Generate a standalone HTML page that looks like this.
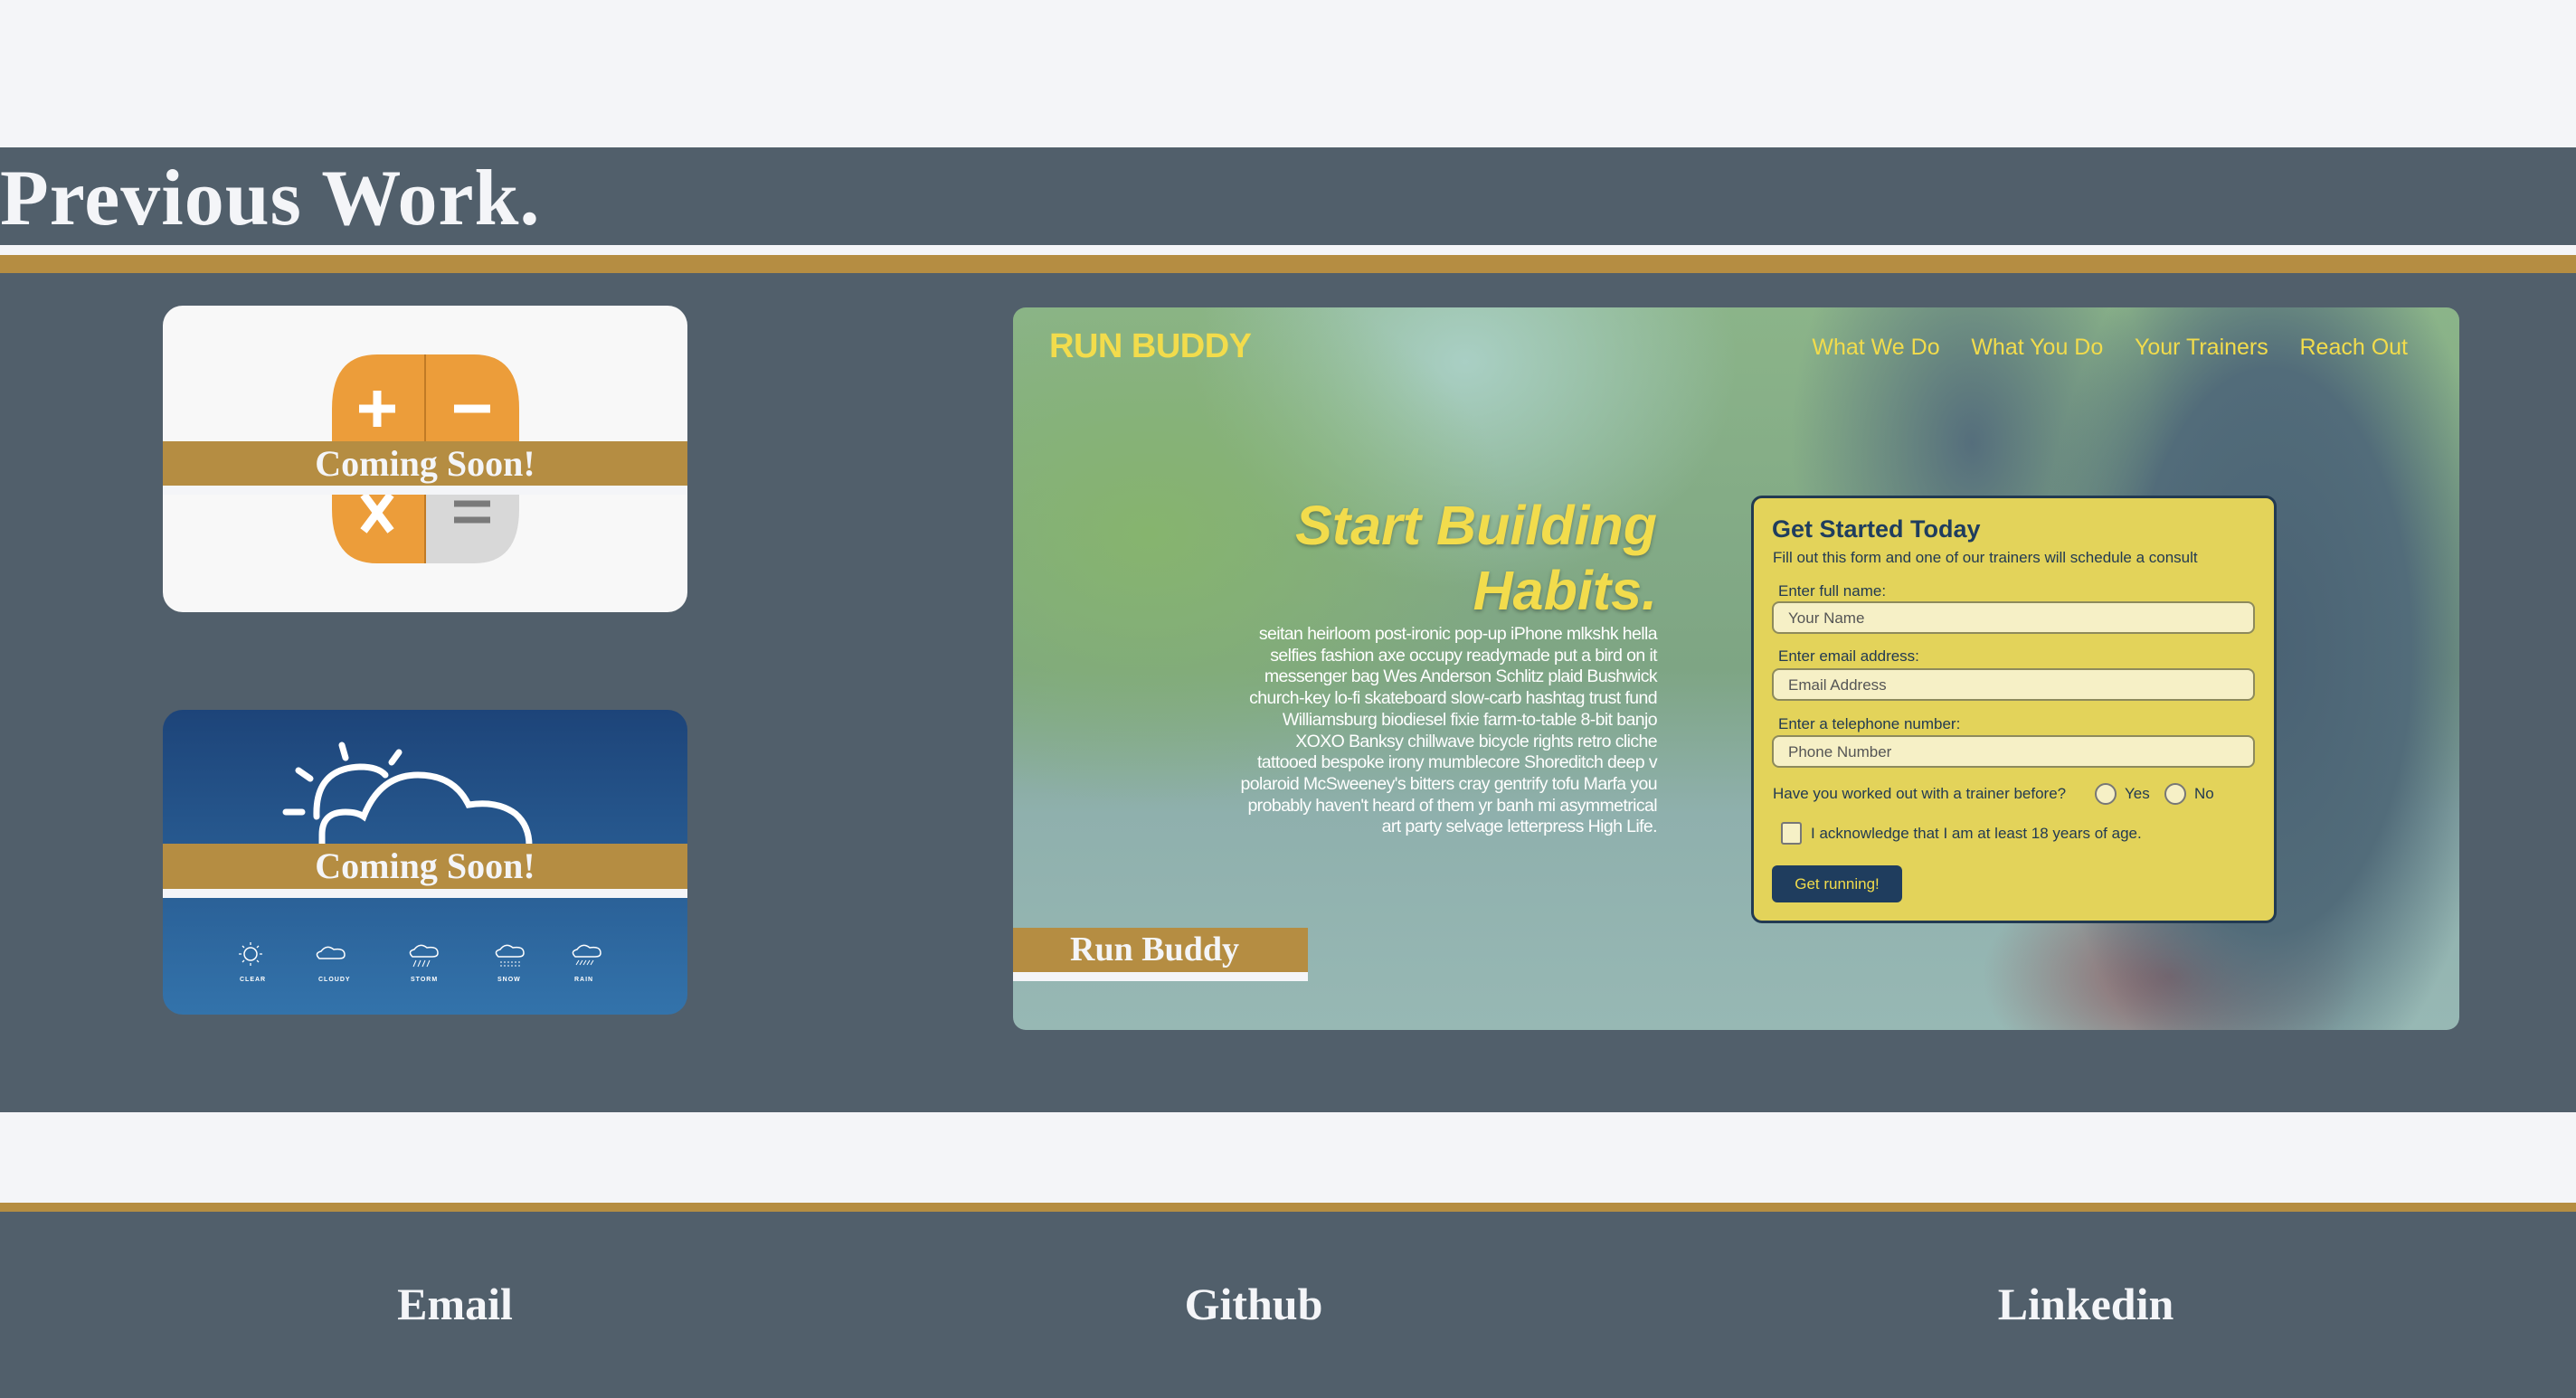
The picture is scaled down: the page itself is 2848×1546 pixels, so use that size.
<!DOCTYPE html>
<html><head><meta charset="utf-8"><style>
*{margin:0;padding:0;box-sizing:border-box}
body{width:2848px;height:1546px;background:#f4f5f8;position:relative;overflow:hidden;font-family:"Liberation Sans",sans-serif}
.abs{position:absolute}
.serif{font-family:"Liberation Serif",serif;font-weight:bold}
.card{position:absolute;border-radius:22px;overflow:hidden}
.banner{position:absolute;left:0;right:0;background:#b58d42;color:#f4f5f8;text-align:center;font-family:"Liberation Serif",serif;font-weight:bold;font-size:40px}
.rb{color:#f2dc4c}
.inp{position:absolute;left:1959px;width:534px;height:36px;border:2px solid #8d8a5c;border-radius:8px;background:#f6f0c6;font-size:17px;color:#555;padding:7px 16px}
</style></head><body>
<div class="abs" style="left:0;top:163px;width:2848px;height:1067px;background:#515f6b"></div>
<div class="abs serif" style="left:0;top:165px;font-size:88px;color:#f4f5f8;letter-spacing:1px;line-height:110px">Previous Work.</div>
<div class="abs" style="left:0;top:271px;width:2848px;height:11px;background:#f4f5f8"></div>
<div class="abs" style="left:0;top:282px;width:2848px;height:20px;background:#b58d42"></div>

<!-- calc card -->
<div class="card" style="left:180px;top:338px;width:580px;height:339px;background:#f8f8f8">
 <svg class="abs" style="left:187px;top:54px" width="207" height="231" viewBox="0 0 207 231">
  <path d="M50 0H157Q207 0 207 60V171Q207 231 157 231H103V0Z" fill="#d8d8d8"/>
  <path d="M50 0H157Q207 0 207 60V115H103V231H50Q0 231 0 171V60Q0 0 50 0Z" fill="#ec9d3a"/>
  <line x1="103" y1="0" x2="103" y2="231" stroke="#c07a25" stroke-width="2"/>
  <path d="M50 40V80M30 60H70" stroke="#fff" stroke-width="9"/>
  <path d="M135 60H175" stroke="#fff" stroke-width="9"/>
  <path d="M35 155L65 195M65 155L35 195" stroke="#fff" stroke-width="9"/>
  <path d="M135 165H175M135 183H175" stroke="#7a7a7a" stroke-width="7"/>
 </svg>
 <div class="abs" style="left:0;top:199px;width:580px;height:10px;background:#f4f5f8"></div>
 <div class="banner" style="top:150px;height:49px;line-height:49px">Coming Soon!</div>
</div>

<!-- weather card -->
<div class="card" style="left:180px;top:785px;width:580px;height:337px;background:linear-gradient(#1d4479,#3373ab)">
 <svg class="abs" style="left:0;top:0" width="580" height="150" viewBox="0 0 580 150">
  <g fill="none" stroke="#fff" stroke-width="7" stroke-linecap="round">
   <path d="M170 118Q168 65 218 63Q238 63 246 72"/>
   <path d="M176 150V138Q176 113 202 113Q215 113 222 118Q240 72 282 72Q322 72 338 105Q370 100 390 115Q405 128 405 150"/>
   <path d="M136 113H154M150 67L163 76M198 39L202 53M261 47L253 58"/>
  </g>
 </svg>
 <div class="banner" style="top:148px;height:50px;line-height:50px">Coming Soon!</div>
 <div class="abs" style="left:0;top:198px;width:580px;height:10px;background:#f4f5f8"></div>
 <div class="abs" style="left:0;top:255px;width:580px;font-size:7px;color:#fff;font-weight:bold;letter-spacing:1px">
  <svg class="abs" style="left:82px;top:0" width="30" height="30" viewBox="0 0 30 30"><circle cx="15" cy="15" r="7" fill="none" stroke="#fff" stroke-width="1.5"/><path d="M15 2V5M15 25V28M2 15H5M25 15H28M6 6L8 8M22 22L24 24M6 24L8 22M22 8L24 6" stroke="#fff" stroke-width="1.3"/></svg>
  <svg class="abs" style="left:167px;top:4px" width="40" height="20" viewBox="0 0 40 20"><path d="M6 16Q0 10 8 8Q14 0 22 6Q34 4 34 12Q34 16 28 16Z" fill="none" stroke="#fff" stroke-width="1.5"/></svg>
  <svg class="abs" style="left:270px;top:2px" width="36" height="30" viewBox="0 0 36 30"><path d="M6 16Q0 10 8 8Q14 0 22 6Q34 4 34 12Q34 16 28 16Z" fill="none" stroke="#fff" stroke-width="1.5"/><path d="M10 20L7 27M15 20L12 27M20 20L17 27M25 20L22 27" stroke="#fff"/></svg>
  <svg class="abs" style="left:365px;top:2px" width="36" height="30" viewBox="0 0 36 30"><path d="M6 16Q0 10 8 8Q14 0 22 6Q34 4 34 12Q34 16 28 16Z" fill="none" stroke="#fff" stroke-width="1.5"/><path d="M8 22H30M8 26H30" stroke="#fff" stroke-dasharray="2 2"/></svg>
  <svg class="abs" style="left:450px;top:2px" width="36" height="30" viewBox="0 0 36 30"><path d="M6 16Q0 10 8 8Q14 0 22 6Q34 4 34 12Q34 16 28 16Z" fill="none" stroke="#fff" stroke-width="1.5"/><path d="M10 20L7 25M14 20L11 25M18 20L15 25M22 20L19 25M26 20L23 25" stroke="#fff"/></svg>
  <span class="abs" style="left:85px;top:40px">CLEAR</span><span class="abs" style="left:172px;top:40px">CLOUDY</span><span class="abs" style="left:274px;top:40px">STORM</span><span class="abs" style="left:370px;top:40px">SNOW</span><span class="abs" style="left:455px;top:40px">RAIN</span>
 </div>
</div>

<!-- run buddy card -->
<div class="card" style="left:1120px;top:340px;width:1599px;height:799px;border-radius:14px;background:
 radial-gradient(ellipse 260px 520px at 1390px 380px,#4a6274 0%,#526c7a 60%,rgba(82,108,122,0) 100%),
 radial-gradient(ellipse 200px 300px at 1060px 150px,#556e7c 0%,rgba(85,110,124,0) 100%),
 radial-gradient(ellipse 260px 160px at 1280px 740px,#8c6066 0%,rgba(140,96,102,0) 80%),
 radial-gradient(ellipse 400px 300px at 150px 250px,#86b46e 0%,rgba(134,180,110,0) 100%),
 radial-gradient(ellipse 300px 250px at 500px 60px,#a9cfc4 0%,rgba(169,207,196,0) 100%),
 linear-gradient(#8bb489 0%,#7ea584 50%,#8fb0ad 70%,#97b8b4 100%)">
 <div class="abs rb" style="left:40px;top:22px;font-size:38px;font-weight:bold;letter-spacing:-0.5px">RUN BUDDY</div>
 <div class="abs rb" style="right:57px;top:30px;font-size:25px;white-space:nowrap">What We Do&nbsp;&nbsp;&nbsp;&nbsp;&nbsp;What You Do&nbsp;&nbsp;&nbsp;&nbsp;&nbsp;Your Trainers&nbsp;&nbsp;&nbsp;&nbsp;&nbsp;Reach Out</div>
 <div class="abs rb" style="right:587px;top:205px;font-size:61px;font-weight:bold;font-style:italic;text-align:right;line-height:72px;text-shadow:0 2px 4px rgba(0,0,0,.3);white-space:nowrap;right:587px"></div>
 <div class="abs rb" style="left:0;width:712px;top:205px;font-size:61px;font-weight:bold;font-style:italic;text-align:right;line-height:72px;text-shadow:0 2px 4px rgba(0,0,0,.3)">Start Building<br>Habits.</div>
 <div class="abs" style="left:0;width:712px;top:350px;font-size:19.5px;color:#fff;text-align:right;line-height:23.7px;letter-spacing:-0.6px;white-space:nowrap">seitan heirloom post-ironic pop-up iPhone mlkshk hella<br>selfies fashion axe occupy readymade put a bird on it<br>messenger bag Wes Anderson Schlitz plaid Bushwick<br>church-key lo-fi skateboard slow-carb hashtag trust fund<br>Williamsburg biodiesel fixie farm-to-table 8-bit banjo<br>XOXO Banksy chillwave bicycle rights retro cliche<br>tattooed bespoke irony mumblecore Shoreditch deep v<br>polaroid McSweeney's bitters cray gentrify tofu Marfa you<br>probably haven't heard of them yr banh mi asymmetrical<br>art party selvage letterpress High Life.</div>
 <div class="abs" style="left:0;top:686px;width:326px;height:49px;background:#b58d42;color:#f4f5f8;font-family:'Liberation Serif',serif;font-weight:bold;font-size:38px;line-height:49px;padding-left:63px">Run Buddy</div>
 <div class="abs" style="left:0;top:735px;width:326px;height:10px;background:#f4f5f8"></div>
</div>
<!-- form -->
<div class="abs" style="left:1936px;top:548px;width:581px;height:473px;background:#e3d35a;border:3px solid #223a52;border-radius:12px"></div>
<div class="abs" style="left:1959px;top:570px;font-size:27px;font-weight:bold;color:#1f3d5e">Get Started Today</div>
<div class="abs" style="left:1960px;top:607px;font-size:17px;color:#223a52">Fill out this form and one of our trainers will schedule a consult</div>
<div class="abs" style="left:1966px;top:644px;font-size:17px;color:#223a52">Enter full name:</div>
<div class="inp" style="top:665px">Your Name</div>
<div class="abs" style="left:1966px;top:716px;font-size:17px;color:#223a52">Enter email address:</div>
<div class="inp" style="top:739px">Email Address</div>
<div class="abs" style="left:1966px;top:791px;font-size:17px;color:#223a52">Enter a telephone number:</div>
<div class="inp" style="top:813px">Phone Number</div>
<div class="abs" style="left:1960px;top:868px;font-size:17px;color:#223a52">Have you worked out with a trainer before?</div>
<div class="abs" style="left:2316px;top:866px;width:24px;height:24px;border-radius:50%;border:2px solid #777;background:#f6f0c6"></div>
<div class="abs" style="left:2349px;top:868px;font-size:17px;color:#223a52">Yes</div>
<div class="abs" style="left:2393px;top:866px;width:24px;height:24px;border-radius:50%;border:2px solid #777;background:#f6f0c6"></div>
<div class="abs" style="left:2426px;top:868px;font-size:17px;color:#223a52">No</div>
<div class="abs" style="left:1969px;top:909px;width:23px;height:25px;border:2px solid #777;border-radius:3px;background:#f6f0c6"></div>
<div class="abs" style="left:2002px;top:912px;font-size:17px;color:#223a52">I acknowledge that I am at least 18 years of age.</div>
<div class="abs" style="left:1959px;top:957px;width:144px;height:41px;background:#1f3d5e;border-radius:6px;color:#f2dc4c;font-size:17px;line-height:41px;text-align:center">Get running!</div>

<!-- footer -->
<div class="abs" style="left:0;top:1330px;width:2848px;height:10px;background:#b58d42"></div>
<div class="abs" style="left:0;top:1340px;width:2848px;height:206px;background:#515f6b"></div>
<div class="abs serif" style="left:303px;width:400px;text-align:center;top:1413px;font-size:50px;color:#f4f5f8">Email</div>
<div class="abs serif" style="left:1186px;width:400px;text-align:center;top:1413px;font-size:50px;color:#f4f5f8">Github</div>
<div class="abs serif" style="left:2106px;width:400px;text-align:center;top:1413px;font-size:50px;color:#f4f5f8">Linkedin</div>
</body></html>
